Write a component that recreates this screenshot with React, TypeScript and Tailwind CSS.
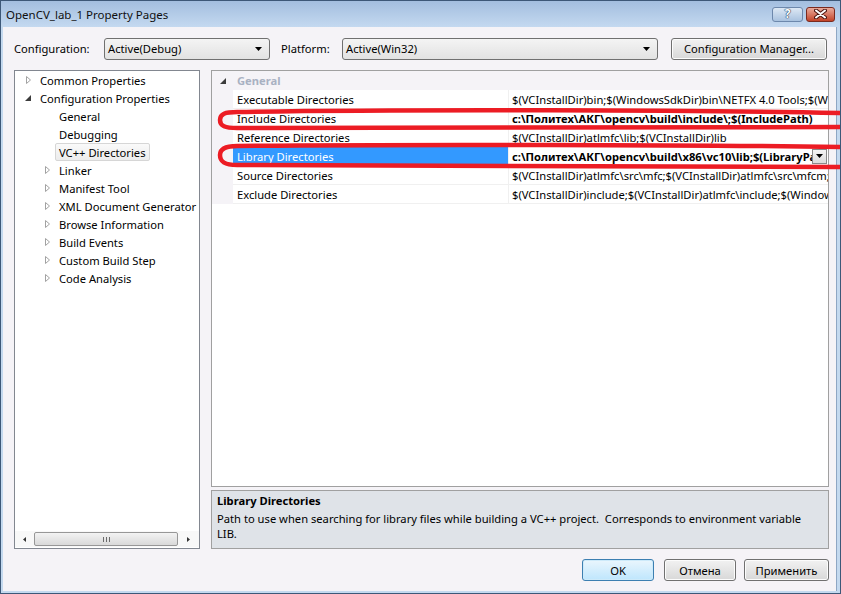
import type { ReactNode } from 'react'

type TreeItem = { label: string; level: 0 | 1; arrow?: 'open' | 'closed'; selected?: boolean }

const tree: TreeItem[] = [
  { label: 'Common Properties', level: 0, arrow: 'closed' },
  { label: 'Configuration Properties', level: 0, arrow: 'open' },
  { label: 'General', level: 1 },
  { label: 'Debugging', level: 1 },
  { label: 'VC++ Directories', level: 1, selected: true },
  { label: 'Linker', level: 1, arrow: 'closed' },
  { label: 'Manifest Tool', level: 1, arrow: 'closed' },
  { label: 'XML Document Generator', level: 1, arrow: 'closed' },
  { label: 'Browse Information', level: 1, arrow: 'closed' },
  { label: 'Build Events', level: 1, arrow: 'closed' },
  { label: 'Custom Build Step', level: 1, arrow: 'closed' },
  { label: 'Code Analysis', level: 1, arrow: 'closed' }
]

type Prop = { name: string; value: string; bold?: boolean; selected?: boolean }

const props: Prop[] = [
  {
    name: 'Executable Directories',
    value: '$(VCInstallDir)bin;$(WindowsSdkDir)bin\\NETFX 4.0 Tools;$(WindowsSdkDir)bin;$(VSInstallDir)Common7\\Tools\\bin'
  },
  { name: 'Include Directories', value: 'c:\\Политех\\АКГ\\opencv\\build\\include\\;$(IncludePath)', bold: true },
  { name: 'Reference Directories', value: '$(VCInstallDir)atlmfc\\lib;$(VCInstallDir)lib' },
  {
    name: 'Library Directories',
    value: 'c:\\Политех\\АКГ\\opencv\\build\\x86\\vc10\\lib;$(LibraryPath)',
    bold: true,
    selected: true
  },
  {
    name: 'Source Directories',
    value: '$(VCInstallDir)atlmfc\\src\\mfc;$(VCInstallDir)atlmfc\\src\\mfcm;$(VCInstallDir)atlmfc\\src\\atl'
  },
  {
    name: 'Exclude Directories',
    value: '$(VCInstallDir)include;$(VCInstallDir)atlmfc\\include;$(WindowsSdkDir)include;$(FrameworkSDKDir)include'
  }
]

function Caret() {
  return (
    <svg width="7" height="4" viewBox="0 0 7 4">
      <path d="M0 0h7L3.5 4z" fill="#000" />
    </svg>
  )
}

function TreeArrow({ kind }: { kind?: 'open' | 'closed' }) {
  if (kind === 'closed')
    return (
      <svg width="5" height="8" viewBox="0 0 5 8">
        <path d="M0.5 0.5L4.5 4L0.5 7.5Z" fill="none" stroke="#a2a2a2" />
      </svg>
    )
  if (kind === 'open')
    return (
      <svg width="6" height="6" viewBox="0 0 6 6">
        <path d="M6 0V6H0Z" fill="#3c3c3c" />
      </svg>
    )
  return null
}

function Select({ value, width }: { value: string; width: string }) {
  return (
    <div
      className={`${width} shrink-0 h-[22px] flex items-center justify-between pl-[3px] pr-[7px] border border-[#707070] rounded-[3px] bg-linear-to-b from-[#f4f4f4] to-[#e2e2e2]`}
    >
      <span>{value}</span>
      <Caret />
    </div>
  )
}

function Button({ children, width, primary }: { children: ReactNode; width: string; primary?: boolean }) {
  return (
    <div
      className={`${width} h-[22px] flex items-center justify-center rounded-[3px] border ${
        primary
          ? 'border-[#3c7fb1] bg-linear-to-b from-[#eaf6fd] to-[#bee6fd] shadow-[inset_0_0_0_1px_#cdeafa]'
          : 'border-[#707070] bg-linear-to-b from-[#f2f2f2] to-[#d8d8d8] shadow-[inset_0_0_0_1px_#fcfcfc]'
      }`}
    >
      {children}
    </div>
  )
}

export default function App() {
  return (
    <div className="relative w-[841px] h-[594px] overflow-hidden bg-[#c4d9ef] border border-[#3d5878] flex flex-col font-['Noto_Sans',sans-serif] text-[11.2px] leading-[15px] text-black">
      {/* Title bar */}
      <div className="h-[26px] shrink-0 flex items-center pl-[5px] pr-[5px] bg-linear-to-b from-[#a3bedf] to-[#c4d9f0]">
        <span className="text-[11.5px] text-[#101010]">OpenCV_lab_1 Property Pages</span>
        <div className="ml-auto flex items-center gap-[3px]">
          <div className="w-[31px] h-[15px] flex items-center justify-center rounded-[3px] border border-[#6d88ac] bg-linear-to-b from-[#dde8f4] to-[#a9c2df]">
            <span className="font-bold text-[12px] leading-none text-white [text-shadow:0_0_1px_#233a58,0_0_1px_#233a58,0_0_1px_#233a58]">
              ?
            </span>
          </div>
          <div className="w-[29px] h-[15px] flex items-center justify-center rounded-[3px] border border-[#7a2a1f] bg-linear-to-b from-[#e9a99a] to-[#c24126]">
            <svg width="13" height="10" viewBox="0 0 13 10">
              <path d="M2 1.5L11 8.5M11 1.5L2 8.5" stroke="#4a1410" strokeWidth="4" strokeLinecap="round" />
              <path d="M2 1.5L11 8.5M11 1.5L2 8.5" stroke="#fff" strokeWidth="2" strokeLinecap="round" />
            </svg>
          </div>
        </div>
      </div>

      {/* Dialog body */}
      <div className="flex-1 min-h-0 ml-[2px] mr-[3px] mb-[2px] bg-[#f5f3f7] border-r border-[#8ea6c4] flex flex-col pl-[11px] pr-[7px]">
        {/* Configuration row */}
        <div className="mt-[10px] h-[23px] flex items-center pr-[2px]">
          <span className="w-[90px] shrink-0">Configuration:</span>
          <Select value="Active(Debug)" width="w-[166px]" />
          <span className="ml-[11px] w-[61px] shrink-0">Platform:</span>
          <Select value="Active(Win32)" width="w-[316px]" />
          <div className="ml-auto">
            <Button width="w-[156px]">Configuration Manager...</Button>
          </div>
        </div>

        {/* Panels */}
        <div className="mt-[10px] h-[479px] flex">
          {/* Tree */}
          <div className="w-[186px] shrink-0 border border-[#828790] bg-white flex flex-col">
            <div className="flex flex-col">
              {tree.map((t) => (
                <div key={t.label} className={`h-[18px] flex items-center ${t.level === 0 ? 'pl-[7px]' : 'pl-[26px]'}`}>
                  <span className="w-[12px] flex items-center justify-center">
                    <TreeArrow kind={t.arrow} />
                  </span>
                  {t.selected ? (
                    <span className="ml-[2px] h-[18px] px-[3px] flex items-center rounded-[2px] border border-[#d6d6d6] bg-linear-to-b from-[#fafafa] to-[#ececec] whitespace-nowrap">
                      {t.label}
                    </span>
                  ) : (
                    <span className="ml-[6px] whitespace-nowrap">{t.label}</span>
                  )}
                </div>
              ))}
            </div>
            {/* horizontal scrollbar */}
            <div className="mt-auto mb-[1px] h-[16px] flex items-center bg-[#f8f8f8]">
              <span className="w-[19px] flex justify-center">
                <svg width="3" height="5" viewBox="0 0 3 5">
                  <path d="M3 0L0 2.5L3 5Z" fill="#333" />
                </svg>
              </span>
              <div className="w-[144px] h-[14px] flex items-center justify-center rounded-[2px] border border-[#979797] bg-linear-to-b from-[#f3f3f3] to-[#d9d9d9]">
                <svg width="7" height="5" viewBox="0 0 7 5">
                  <path d="M0.5 0V5M3.5 0V5M6.5 0V5" stroke="#6b6b6b" strokeWidth="1" />
                </svg>
              </div>
              <span className="flex-1 flex justify-center">
                <svg width="3" height="5" viewBox="0 0 3 5">
                  <path d="M0 0L3 2.5L0 5Z" fill="#333" />
                </svg>
              </span>
            </div>
          </div>

          {/* Right column */}
          <div className="ml-[11px] flex-1 min-w-0 flex flex-col">
            <div className="h-[417px] border border-[#a0a0a0] bg-white flex flex-col">
              <div className="h-[19px] flex items-center bg-[#f5f3f7]">
                <span className="w-[21px] flex justify-center pl-[1px]">
                  <TreeArrow kind="open" />
                </span>
                <span className="pl-[4px] font-bold text-[#a9b1c2]">General</span>
              </div>
              {props.map((p) => (
                <div key={p.name} className="h-[19px] flex">
                  <div className="w-[21px] shrink-0 bg-[#f5f3f7]" />
                  <div
                    className={`w-[275px] shrink-0 pl-[4px] flex items-center border-b border-[#f0f0f0] whitespace-nowrap overflow-hidden ${
                      p.selected ? 'bg-[#3399ff] text-white' : ''
                    }`}
                  >
                    {p.name}
                  </div>
                  <div className="w-[1px] shrink-0 bg-[#f0f0f0]" />
                  <div className="flex-1 min-w-0 flex items-center border-b border-[#f0f0f0] overflow-hidden">
                    <span
                      className={`pl-[3px] flex-1 min-w-0 whitespace-nowrap overflow-hidden ${p.bold ? 'font-bold' : ''}`}
                    >
                      {p.value}
                    </span>
                    {p.selected && (
                      <span className="mr-[1px] shrink-0 w-[15px] h-[15px] flex items-center justify-center border border-[#8a8a8a] bg-linear-to-b from-[#f4f4f4] to-[#dcdcdc]">
                        <Caret />
                      </span>
                    )}
                  </div>
                </div>
              ))}
            </div>
            <div className="mt-[3px] flex-1 border border-[#a0a0a0] bg-[#dfe3e8] pl-[5px] pt-[2px]">
              <div className="font-bold">Library Directories</div>
              <div className="mt-[3px]">
                Path to use when searching for library files while building a VC++ project.&nbsp; Corresponds to
                environment variable
                <br />
                LIB.
              </div>
            </div>
          </div>
        </div>

        {/* Buttons */}
        <div className="mt-[10px] flex justify-end gap-[10px]">
          <Button width="w-[72px]" primary>
            OK
          </Button>
          <Button width="w-[72px]">Отмена</Button>
          <div className="-ml-[2px]">
            <Button width="w-[85px]">Применить</Button>
          </div>
        </div>
      </div>

      {/* red marker ovals drawn over the grid */}
      <svg className="absolute left-0 top-0 pointer-events-none" width="841" height="594" viewBox="0 0 841 594">
        <path
          d="M843 112C700 109 400 108 236 111C224 111 219 113 219 119C219 125 224 127 236 127L843 126"
          fill="none"
          stroke="#ec1c24"
          strokeWidth="4.5"
          strokeLinecap="round"
        />
        <path
          d="M843 146C700 144 400 143 236 145C224 145 219 148 219 154C219 161 224 164 236 164L843 166"
          fill="none"
          stroke="#ec1c24"
          strokeWidth="4.5"
          strokeLinecap="round"
        />
      </svg>
    </div>
  )
}
